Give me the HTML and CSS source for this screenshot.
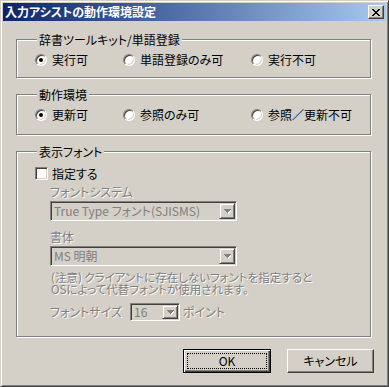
FILE: index.html
```html
<!DOCTYPE html>
<html lang="ja">
<head>
<meta charset="utf-8">
<title>入力アシストの動作環境設定</title>
<link rel="stylesheet" href="styles.css">
</head>
<body>
<div class="window">
  <div class="titlebar">
    <span class="title">入力アシストの動作環境設定</span>
    <span class="close"><svg width="8" height="7" viewBox="0 0 8 7" shape-rendering="crispEdges"><path d="M0 0h2v1H0zM6 0h2v1H6zM1 1h2v1H1zM5 1h2v1H5zM2 2h4v1H2zM3 3h2v1H3zM2 4h4v1H2zM1 5h2v1H1zM5 5h2v1H5zM0 6h2v1H0zM6 6h2v1H6z" fill="#000"/></svg></span>
  </div>
  <div class="content">
    <div class="group g1">
      <div class="legend">辞書ツールキット/単語登録</div>
      <div class="radios">
        <div class="opt"><span class="radio on"></span><span>実行可</span></div>
        <div class="opt"><span class="radio"></span><span>単語登録のみ可</span></div>
        <div class="opt"><span class="radio"></span><span>実行不可</span></div>
      </div>
    </div>
    <div class="group g2">
      <div class="legend">動作環境</div>
      <div class="radios">
        <div class="opt"><span class="radio on"></span><span>更新可</span></div>
        <div class="opt"><span class="radio"></span><span>参照のみ可</span></div>
        <div class="opt"><span class="radio"></span><span>参照／更新不可</span></div>
      </div>
    </div>
    <div class="group g3">
      <div class="legend">表示フォント</div>
      <div class="check-row"><span class="checkbox"></span><span>指定する</span></div>
      <div class="sub">
        <div class="dis lbl-sys">フォントシステム</div>
        <div class="combo wide"><span class="val">True Type フォント(SJISMS)</span><span class="arrow"><svg width="7" height="5" viewBox="0 0 7 5" shape-rendering="crispEdges"><path d="M1 1h7v1H1zM2 2h5v1H2zM3 3h3v1H3zM4 4h1v1H4z" fill="#fff"/><path d="M0 0h7v1H0zM1 1h5v1H1zM2 2h3v1H2zM3 3h1v1H3z" fill="#808080"/></svg></span></div>
        <div class="dis lbl-face">書体</div>
        <div class="combo wide"><span class="val">MS 明朝</span><span class="arrow"><svg width="7" height="5" viewBox="0 0 7 5" shape-rendering="crispEdges"><path d="M1 1h7v1H1zM2 2h5v1H2zM3 3h3v1H3zM4 4h1v1H4z" fill="#fff"/><path d="M0 0h7v1H0zM1 1h5v1H1zM2 2h3v1H2zM3 3h1v1H3z" fill="#808080"/></svg></span></div>
        <div class="dis note"><div>(注意) クライアントに存在しないフォントを指定すると</div><div>OSによって代替フォントが使用されます。</div></div>
        <div class="size-row">
          <span class="dis size-lbl">フォントサイズ</span>
          <div class="combo small"><span class="val">16</span><span class="arrow"><svg width="7" height="5" viewBox="0 0 7 5" shape-rendering="crispEdges"><path d="M1 1h7v1H1zM2 2h5v1H2zM3 3h3v1H3zM4 4h1v1H4z" fill="#fff"/><path d="M0 0h7v1H0zM1 1h5v1H1zM2 2h3v1H2zM3 3h1v1H3z" fill="#808080"/></svg></span></div>
          <span class="dis pt">ポイント</span>
        </div>
      </div>
    </div>
    <div class="buttons">
      <div class="btn default"><span class="focus">OK</span></div>
      <div class="btn">キャンセル</div>
    </div>
  </div>
</div>
</body>
</html>
```

FILE: styles.css
```css
html, body {
  margin: 0;
  padding: 0;
  background: #d4d0c8;
}

.window {
  width: 389px;
  height: 387px;
  box-sizing: border-box;
  border: 1px solid;
  border-color: #d4d0c8 #404040 #404040 #d4d0c8;
  box-shadow: inset 1px 1px #fff, inset -1px -1px #808080;
  padding: 2px;
  background: #d4d0c8;
  font-family: "Noto Sans CJK JP", "Liberation Sans", sans-serif;
  font-size: 12px;
  line-height: 14px;
  font-feature-settings: "palt";
  color: #000;
}

.titlebar {
  height: 18px;
  display: flex;
  align-items: center;
  justify-content: space-between;
  padding: 0 2px 0 2px;
  background: linear-gradient(to right, #0a246a, #a6caf0);
}

.title {
  color: #fff;
  font-weight: bold;
  font-size: 12px;
  line-height: 14px;
}

.close {
  width: 16px;
  height: 14px;
  box-sizing: border-box;
  border: 1px solid;
  border-color: #fff #404040 #404040 #fff;
  box-shadow: inset -1px -1px #808080;
  background: #d4d0c8;
  display: flex;
  align-items: center;
  justify-content: center;
}

.close svg { display: block; }

.content {
  padding: 18px 15px 0 13px;
}

.group {
  border: 1px solid #808080;
  box-shadow: inset 1px 1px #fff, 1px 1px #fff;
}

.legend {
  margin: -7px 0 0 2px;
  padding: 0 2px;
  width: max-content;
  height: 14px;
  background: #d4d0c8;
}

.g1 { padding: 0 0 12px 18px; }
.g2 { margin-top: 16px; padding: 0 0 14px 18px; }
.g3 { margin-top: 16px; padding: 0 0 15px 18px; }

.radios {
  display: grid;
  grid-template-columns: 88px 128px auto;
  margin-top: 6px;
  height: 12px;
  align-items: center;
}

.opt {
  display: flex;
  align-items: center;
  gap: 5px;
  white-space: nowrap;
}

.radio {
  width: 12px;
  height: 12px;
  box-sizing: border-box;
  border-radius: 50%;
  border: 1px solid;
  border-color: #808080 #fff #fff #808080;
  box-shadow: inset 1px 1px #404040, inset -1px -1px #d4d0c8;
  background: #fff;
  display: flex;
  align-items: center;
  justify-content: center;
  flex: none;
}

.radio.on::after {
  content: "";
  width: 4px;
  height: 4px;
  border-radius: 50%;
  background: #000;
}

.check-row {
  margin-top: 8px;
  height: 13px;
  display: flex;
  align-items: center;
  gap: 4px;
}

.checkbox {
  width: 13px;
  height: 13px;
  box-sizing: border-box;
  border: 1px solid;
  border-color: #808080 #fff #fff #808080;
  box-shadow: inset 1px 1px #404040, inset -1px -1px #d4d0c8;
  background: #fff;
  flex: none;
}

.sub {
  margin-left: 15px;
}

.dis {
  color: #808080;
  text-shadow: 1px 1px 0 #fff;
}

.lbl-sys { margin-top: 5px; }
.lbl-face { margin-top: 9px; }

.combo {
  margin-top: 2px;
  height: 20px;
  box-sizing: border-box;
  display: flex;
  align-items: stretch;
  border: 1px solid;
  border-color: #808080 #fff #fff #808080;
  box-shadow: inset 1px 1px #404040, inset -1px -1px #d4d0c8;
  padding: 1px;
  background: #d4d0c8;
}

.combo.wide { width: 187px; }

.combo .val {
  flex: 1;
  padding-left: 2px;
  color: #808080;
  line-height: 14px;
  align-self: center;
  white-space: nowrap;
}

.combo .arrow {
  width: 16px;
  box-sizing: border-box;
  border: 1px solid;
  border-color: #d4d0c8 #404040 #404040 #d4d0c8;
  box-shadow: inset 1px 1px #fff, inset -1px -1px #808080;
  display: flex;
  align-items: center;
  justify-content: center;
  flex: none;
}

.combo .arrow svg { display: block; }

.note {
  margin-top: 5px;
  margin-left: 1px;
  font-size: 11.5px;
  line-height: 12px;
  white-space: nowrap;
}

.size-row {
  margin-top: 8px;
  height: 18px;
  display: flex;
  align-items: center;
}

.size-lbl { width: 80px; }

.combo.small {
  margin-top: 0;
  width: 50px;
  height: 18px;
}

.pt { margin-left: 3px; }

.buttons {
  display: flex;
  justify-content: flex-end;
  gap: 16px;
  margin-top: 12px;
  margin-right: -3px;
}

.btn {
  width: 87px;
  height: 24px;
  box-sizing: border-box;
  border: 1px solid;
  border-color: #fff #404040 #404040 #fff;
  box-shadow: inset -1px -1px #808080;
  display: flex;
  align-items: center;
  justify-content: center;
  background: #d4d0c8;
}

.btn.default {
  width: 88px;
  border-color: #000;
  box-shadow: inset 1px 1px #fff, inset -1px -1px #404040, inset -2px -2px #808080;
  padding: 3px;
}

.focus {
  flex: 1;
  align-self: stretch;
  border: 1px dotted #000;
  display: flex;
  align-items: center;
  justify-content: center;
}
```
